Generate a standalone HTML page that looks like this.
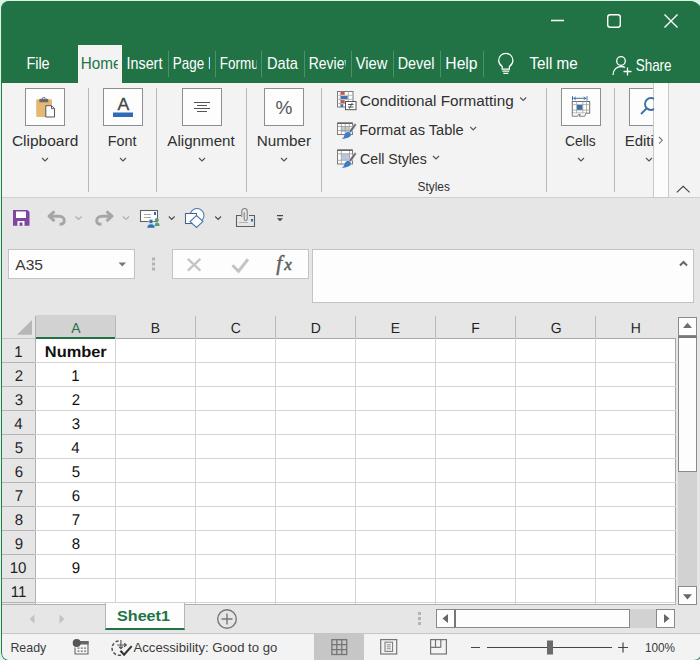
<!DOCTYPE html>
<html><head><meta charset="utf-8">
<style>
*{box-sizing:border-box;margin:0;padding:0}
html,body{width:700px;height:660px;overflow:hidden;background:#d6f5e5;font-family:"Liberation Sans",sans-serif;}
#win{position:absolute;left:1px;top:1px;width:701px;height:660px;background:#e6e6e6;border-radius:8px 12px 8px 8px;overflow:hidden;}
.a{position:absolute}
svg{position:absolute;overflow:visible}
#title{position:absolute;left:0;top:0;width:701px;height:82px;background:#217346}
#lborder{position:absolute;left:0;top:0;width:701px;height:660px;border:1px solid #2a7a50;border-top-color:#217346;border-radius:8px 12px 8px 8px}
.tab{position:absolute;top:52px;font-size:15.5px;color:#fff;white-space:nowrap;overflow:hidden;height:22px;line-height:22px}
.tsep{position:absolute;top:50px;width:1px;height:26px;background:#4d9069}
#home{position:absolute;left:77px;top:44px;width:44px;height:39px;background:#f3f3f3}
#ribbon{position:absolute;left:1px;top:82px;width:700px;height:115px;background:#f3f3f3;border-bottom:1px solid #cfcfcf}
.gsep{position:absolute;top:87px;width:1px;height:104px;background:#b8b8b8}
.ibox{position:absolute;top:87px;width:40px;height:38px;background:#fdfdfd;border:1px solid #8e8e8e}
.gl{position:absolute;top:129px;height:20px;line-height:20px;font-size:15.5px;color:#2b2b2b;text-align:center;white-space:nowrap}
.sl{position:absolute;height:20px;line-height:20px;font-size:15.5px;color:#2b2b2b;white-space:nowrap}
#grid{position:absolute;left:35px;top:337px;width:640px;height:266px;background:#fff}
.vl{position:absolute;top:315px;width:1px;height:288px;background:#d4d4d4}
.hl{position:absolute;left:1px;width:674px;height:1px;background:#d4d4d4}
.ch{position:absolute;top:318px;width:80px;height:18px;line-height:18px;text-align:center;font-size:14.5px;color:#262626}
.rh{position:absolute;left:1px;width:34px;height:22px;line-height:22px;text-align:center;font-size:14.5px;color:#262626}
.cv{position:absolute;left:35px;width:80px;height:22px;line-height:22px;text-align:center;font-size:14.5px;color:#111}
.st{position:absolute;font-size:13px;color:#3b3b3b;white-space:nowrap;height:18px;line-height:18px}
</style></head><body>
<div id="win">
<div id="title"></div>
<div id="home"></div>
<div class="tsep" style="left:167px"></div>
<div class="tsep" style="left:214px"></div>
<div class="tsep" style="left:260px"></div>
<div class="tsep" style="left:303px"></div>
<div class="tsep" style="left:350px"></div>
<div class="tsep" style="left:392px"></div>
<div class="tsep" style="left:439px"></div>
<div class="tsep" style="left:482px"></div>
<!-- window controls -->
<svg style="left:0;top:0" width="699" height="82" viewBox="0 0 699 82" fill="none" stroke="#fff" stroke-width="1.4">
<path d="M550 19.5h13"/>
<rect x="606.7" y="13.7" width="12.6" height="12.6" rx="2.5"/>
<path d="M663.5 13.5l13 13M676.5 13.5l-13 13"/>
<!-- lightbulb -->
<path d="M501.200 65.600c-2.500-2-3.500-4-3.500-6.200a7.100 7.100 0 0 1 14.200 0c0 2.200-1 4.200-3.500 6.200v2.400h-7.200zM501.300 70.200h7M502.300 72.300h5" stroke-width="1.250"/>
<!-- share person -->
<circle cx="620" cy="60" r="4.300" stroke-width="1.3"/>
<path d="M612 74c0-5 3.500-8.500 8-8.500 1.500 0 2.800 .3 4 1M626.500 66.500v8M622.500 70.500h8" stroke-width="1.300"/>
</svg>

<div id="ribbon"></div>
<div class="gsep" style="left:87px"></div>
<div class="gsep" style="left:155px"></div>
<div class="gsep" style="left:245px"></div>
<div class="gsep" style="left:320px"></div>
<div class="gsep" style="left:545px"></div>
<div class="gsep" style="left:613px"></div>
<div class="ibox" style="left:24px"></div>
<div class="ibox" style="left:102px"></div>
<div class="ibox" style="left:181px"></div>
<div class="ibox" style="left:263px"></div>
<div class="ibox" style="left:560px"></div>
<div class="ibox" style="left:628px"></div>
<!-- ribbon scroll button -->
<div class="a" style="left:652px;top:82px;width:16px;height:115px;background:#fcfcfc;border:1px solid #c8c8c8;border-top:none"></div>

<svg style="left:0;top:0" width="699" height="200" viewBox="0 0 699 200" fill="none">
<!-- chevrons -->
<g stroke="#555" stroke-width="1.200">
<path d="M41 157l3 3 3-3M119 157l3 3 3-3M198 157l3 3 3-3M280 157l3 3 3-3M577 157l3 3 3-3M645 157l3 3 3-3"/>
<path d="M519.200 96.500l3 3 3-3M469.200 125.800l3 3 3-3M432 155l3 3 3-3"/>

<path d="M675.800 191.400l6.400-6 6.400 6" stroke="#444" stroke-width="1.150"/>
</g>
<!-- clipboard icon -->
<rect x="35.200" y="98.200" width="15.800" height="17.800" rx="1.200" fill="#e5b873"/>
<path d="M38.300 101.200v-2.200q0-1.300 1.300-1.300h1.500a1.700 1.700 0 0 1 3.400 0h1.500q1.300 0 1.300 1.300v2.200z" fill="#6a6a6a"/>
<circle cx="42.800" cy="97.500" r=".7" fill="#f3f3f3"/>
<path d="M44.800 104.700h5.700l3 3v8.300h-8.700z" fill="#fff" stroke="#555" stroke-width="1"/>
<path d="M50.500 104.700v3h3" fill="none" stroke="#555" stroke-width=".9"/>
<!-- font icon -->
<text transform="translate(122.300 109.400) scale(1.05 1)" font-family="Liberation Sans" font-size="16.800" fill="#454545" stroke="#454545" stroke-width=".3" text-anchor="middle">A</text>
<rect x="112" y="111.500" width="20" height="4.500" fill="#2e6db4"/>
<!-- alignment icon -->
<path d="M193 101.500h16M196 104.500h10M193 107.500h16M196 110.500h10" stroke="#555" stroke-width="1"/>
<!-- number icon -->
<text x="283" y="113" font-family="Liberation Sans" font-size="19" fill="#555" text-anchor="middle">%</text>
<!-- cond format icon -->
<g transform="translate(-1 -1)">
<rect x="337.500" y="91.500" width="15.500" height="15.500" fill="#fff" stroke="#7a7a7a"/>
<path d="M337.500 95.300h15.500M337.500 99.400h15.500M337.500 103.500h10M340.300 91.500v15.500M348.300 91.500v10" stroke="#a9a9a9" stroke-width=".8"/>
<rect x="340.700" y="92" width="4" height="2.800" fill="#c9553f"/>
<rect x="340.700" y="96" width="7" height="3" fill="#3d75b8"/>
<rect x="340.700" y="100.100" width="4" height="3" fill="#c9553f"/>
<rect x="340.700" y="104.200" width="2.600" height="2.800" fill="#3d75b8"/>
<rect x="345.500" y="101.500" width="10.500" height="8.200" fill="#fff" stroke="#555"/>
<path d="M348 104.500h5.500M348 107h5.500M352.300 102.800l-3 5.800" stroke="#444" stroke-width=".9"/>
</g>
<!-- format as table icon -->
<g transform="translate(-1 -1)">
<rect x="337.500" y="123" width="15" height="11.500" fill="#fff" stroke="#7a7a7a"/>
<rect x="341" y="126.500" width="8" height="5.500" fill="#c5cbd4"/>
<path d="M337.500 126.500h15M337.500 130.500h15M341.300 123v11.500M345.300 123v11.500M349.300 123v11.500" stroke="#9a9a9a" stroke-width=".8"/>
<path d="M337.500 123.300h15" stroke="#666" stroke-width="1.400"/>
<path d="M356.300 125.300l-5.300 7.700-2.300-1.700 5.600-7.500c1.200-.6 2.300 .2 2 1.500z" fill="#6b6b6b" stroke="#f3f3f3" stroke-width=".6"/>
<path d="M348.600 131.800l2.200 1.700c.8 1.600-.4 3.200-2.300 4-2 .9-4.500 1.200-6.900 1.600 2.300-1.400 2.300-3 3.100-4.700 .7-1.500 2.100-2.600 3.900-2.600z" fill="#3d7cc9"/>
</g>
<!-- cell styles icon -->
<g transform="translate(-1 -1)">
<rect x="337.500" y="150" width="15" height="14" fill="#fff" stroke="#7a7a7a"/>
<rect x="341.500" y="154" width="8" height="6" fill="#b9c8dc"/>
<path d="M337.500 153.800h15M337.500 160.300h15M341.300 150v14M349.500 150v14" stroke="#9a9a9a" stroke-width=".8"/>
<path d="M337.500 150.300h15" stroke="#666" stroke-width="1.400"/>
<path d="M356.300 154.300l-5.300 7.700-2.300-1.700 5.600-7.500c1.200-.6 2.300 .2 2 1.500z" fill="#6b6b6b" stroke="#f3f3f3" stroke-width=".6"/>
<path d="M348.600 160.800l2.200 1.700c.8 1.600-.4 3.200-2.300 4-2 .9-4.500 1.200-6.900 1.600 2.300-1.400 2.300-3 3.100-4.700 .7-1.500 2.100-2.600 3.900-2.600z" fill="#3d7cc9"/>
</g>
<!-- cells icon -->
<g transform="translate(-1 -1)">
<path d="M573.500 98.300h12.500M572.500 96.200v4.300M587 96.200v4.300" stroke="#3a6ea5" stroke-width="1"/>
<path d="M575.800 96.800l-2 1.500 2 1.500M583.700 96.800l2 1.500-2 1.500" stroke="#3a6ea5" stroke-width=".9" fill="none"/>
<rect x="572.300" y="101.500" width="17.400" height="11.700" fill="#fff" stroke="#6e6e6e"/>
<path d="M572.300 104.600h17.400M572.300 110.100h17.400M576.600 101.500v11.700M582.800 101.500v11.700M586.500 101.500v11.700" stroke="#a0a0a0" stroke-width=".8"/>
<rect x="577" y="105" width="5.400" height="4.800" fill="#3a6ea5"/>
<path d="M572.300 113.200v3h5.200l1.200-1.800h1.600l-1.200 1.800h5.700l1.300-3" fill="#fff" stroke="#6e6e6e" stroke-width=".9"/>
</g>
<!-- editing icon -->
<g stroke="#3a6ea5" stroke-width="1.800" fill="none">
<circle cx="650" cy="103" r="6"/>
<path d="M645.500 107.500l-5.500 5.500"/>
</g>
</svg>
<!-- re-cover editing icon by scroll button -->
<div class="a" style="left:653px;top:82px;width:14px;height:114px;background:#fcfcfc"></div>
<svg style="left:0;top:0" width="699" height="200" viewBox="0 0 699 200" fill="none"><path d="M658 136l3.300 3.300-3.300 3.300" stroke="#777" stroke-width="1.100"/></svg>

<!-- QAT -->
<svg style="left:0;top:197px" width="699" height="42" viewBox="0 197 699 42" fill="none">
<!-- save -->
<path d="M12 209h14.500l2 2v13.800h-16.500z" fill="#7f469f"/>
<rect x="15" y="210.500" width="10" height="6.500" fill="#fff"/>
<rect x="16.500" y="220" width="7" height="4.800" fill="#fff"/>
<rect x="18.500" y="221.500" width="3" height="3.300" fill="#7f469f"/>
<!-- undo -->
<path d="M53.500 210.300l-5.500 4.900 5.500 4.900M48.500 215.200h9.500c3.400 0 5.300 2 5.300 4.300s-1.900 3.800-4.800 3.800" stroke="#a6a6a6" stroke-width="2.900" stroke-linejoin="round"/>
<path d="M74.500 215.500l3 3 3-3" stroke="#b0b0b0" stroke-width="1.200"/>
<!-- redo -->
<path d="M105.500 210.300l5.500 4.900-5.500 4.900M110.500 215.200h-9.500c-3.400 0-5.300 2-5.300 4.300s1.900 3.800 4.800 3.800" stroke="#a6a6a6" stroke-width="2.900" stroke-linejoin="round"/>
<path d="M122 215.500l3 3 3-3" stroke="#b0b0b0" stroke-width="1.200"/>
<!-- mail people -->
<rect x="139.500" y="209.500" width="17" height="11" fill="#fff" stroke="#606060" stroke-width="1.050"/>
<path d="M143 213.500h7M143 216.500h7" stroke="#a8a8a8" stroke-width="1"/>
<rect x="153" y="211" width="2" height="3" fill="#2e6db4"/>
<circle cx="150" cy="220.500" r="2.300" fill="#2e6db4" stroke="#e6e6e6" stroke-width=".8"/>
<path d="M146 227c0-2.800 1.800-4 4-4s4 1.200 4 4z" fill="#2e6db4" stroke="#e6e6e6" stroke-width=".5"/>
<circle cx="155.800" cy="219" r="2" fill="#5a9a78"/>
<path d="M153.600 225c.2-2.300 1-3.400 2.400-3.400s2.600 1.100 2.600 3.400z" fill="#5a9a78"/>
<path d="M167.800 215.500l2.900 2.900 2.900-2.900M214.200 215.500l2.900 2.900 2.900-2.900" stroke="#505050" stroke-width="1.200"/>
<!-- shapes -->
<circle cx="196" cy="214.500" r="7" fill="#fff" stroke="#4a78ae" stroke-width="1.050"/>
<rect x="184.500" y="212.500" width="11" height="10" fill="#fff" stroke="#4a6488" stroke-width="1.050"/>
<path d="M195.500 214.500l6.500 6-6.500 6-6.500-6z" fill="#fff" stroke="#4a78ae" stroke-width="1.050"/>
<!-- attach -->
<path d="M240 214.500h-4.500v11h18v-11h-5.500" stroke="#5e5e5e" stroke-width="1.100"/>
<path d="M238 221.500h9" stroke="#aaa" stroke-width=".9"/>
<path d="M240.800 216v-5.800a2.700 2.700 0 0 1 5.400 0v7.800a1.500 1.500 0 0 1-3 0v-6.800" stroke="#7d7d7d" stroke-width="1.050"/>
<rect x="250" y="218" width="2" height="2.500" fill="#2e6db4"/>
<!-- customize -->
<path d="M276 214.600h6" stroke="#444" stroke-width="1.300"/>
<path d="M276 217.200h6l-3 3z" fill="#444"/>
</svg>

<!-- formula bar -->
<div class="a" style="left:7px;top:248px;width:127px;height:30px;background:#fdfdfd;border:1px solid #c3c3c3"></div>
<div class="a" style="left:171px;top:248px;width:137px;height:30px;background:#fdfdfd;border:1px solid #c3c3c3"></div>
<div class="a" style="left:311px;top:248px;width:382px;height:54px;background:#fdfdfd;border:1px solid #c3c3c3"></div>
<svg style="left:0;top:240px" width="699" height="70" viewBox="0 240 699 70" fill="none">
<path d="M117.500 261.500h7.500l-3.750 4z" fill="#777"/>
<rect x="151" y="256.500" width="3" height="3" fill="#b3b3b3"/><rect x="151" y="261.500" width="3" height="3" fill="#b3b3b3"/><rect x="151" y="266.500" width="3" height="3" fill="#b3b3b3"/>
<path d="M186.800 257.800l12.600 11.800M199.400 257.800l-12.600 11.800" stroke="#c4c4c4" stroke-width="2.300"/>
<path d="M231.500 264.200l6 6 9.500-12" stroke="#c4c4c4" stroke-width="3" stroke-linejoin="miter"/>
<text x="275.200" y="268.600" font-family="Liberation Serif" font-style="italic" font-size="21" fill="#606060" stroke="#606060" stroke-width=".45">f</text><text x="283.200" y="269" font-family="Liberation Serif" font-style="italic" font-size="17" fill="#606060" stroke="#606060" stroke-width=".55">x</text>
<path d="M679 264.500l3.500-3.500 3.500 3.500" stroke="#666" stroke-width="2"/>
</svg>

<!-- grid -->
<svg style="left:0;top:0" width="40" height="340" viewBox="0 0 40 340"><path d="M31 319v14.700h-15z" fill="#b7b7b7"/></svg>
<div class="a" style="left:35px;top:314px;width:80px;height:24px;background:#d2d2d2"></div>
<div id="grid"></div>
<div class="a" style="left:35px;top:336px;width:80px;height:2px;background:#217346"></div>
<div class="a" style="left:115px;top:337px;width:560px;height:1px;background:#a8a8a8"></div>
<div class="a" style="left:1px;top:337px;width:34px;height:1px;background:#c6c6c6"></div>
<div class="vl" style="left:34px;background:#b0b0b0"></div>
<div class="vl" style="left:114px;background:#d4d4d4"></div>
<div class="vl" style="left:194px;background:#d4d4d4"></div>
<div class="vl" style="left:274px;background:#d4d4d4"></div>
<div class="vl" style="left:354px;background:#d4d4d4"></div>
<div class="vl" style="left:434px;background:#d4d4d4"></div>
<div class="vl" style="left:514px;background:#d4d4d4"></div>
<div class="vl" style="left:594px;background:#d4d4d4"></div>
<div class="vl" style="left:674px;top:337px;height:266px;background:#a6a6a6"></div>
<div class="a" style="left:114px;top:315px;height:22px;width:1px;background:#b9b9b9"></div>
<div class="a" style="left:194px;top:315px;height:22px;width:1px;background:#b9b9b9"></div>
<div class="a" style="left:274px;top:315px;height:22px;width:1px;background:#b9b9b9"></div>
<div class="a" style="left:354px;top:315px;height:22px;width:1px;background:#b9b9b9"></div>
<div class="a" style="left:434px;top:315px;height:22px;width:1px;background:#b9b9b9"></div>
<div class="a" style="left:514px;top:315px;height:22px;width:1px;background:#b9b9b9"></div>
<div class="a" style="left:594px;top:315px;height:22px;width:1px;background:#b9b9b9"></div>

<div class="hl" style="top:361px"></div>
<div class="a" style="left:1px;top:361px;width:33px;height:1px;background:#b4b4b4"></div>
<div class="hl" style="top:385px"></div>
<div class="a" style="left:1px;top:385px;width:33px;height:1px;background:#b4b4b4"></div>
<div class="hl" style="top:409px"></div>
<div class="a" style="left:1px;top:409px;width:33px;height:1px;background:#b4b4b4"></div>
<div class="hl" style="top:433px"></div>
<div class="a" style="left:1px;top:433px;width:33px;height:1px;background:#b4b4b4"></div>
<div class="hl" style="top:457px"></div>
<div class="a" style="left:1px;top:457px;width:33px;height:1px;background:#b4b4b4"></div>
<div class="hl" style="top:481px"></div>
<div class="a" style="left:1px;top:481px;width:33px;height:1px;background:#b4b4b4"></div>
<div class="hl" style="top:505px"></div>
<div class="a" style="left:1px;top:505px;width:33px;height:1px;background:#b4b4b4"></div>
<div class="hl" style="top:529px"></div>
<div class="a" style="left:1px;top:529px;width:33px;height:1px;background:#b4b4b4"></div>
<div class="hl" style="top:553px"></div>
<div class="a" style="left:1px;top:553px;width:33px;height:1px;background:#b4b4b4"></div>
<div class="hl" style="top:577px"></div>
<div class="a" style="left:1px;top:577px;width:33px;height:1px;background:#b4b4b4"></div>
<div class="hl" style="top:601px"></div>
<div class="a" style="left:1px;top:601px;width:33px;height:1px;background:#b4b4b4"></div>

<!-- vertical scrollbar -->
<div class="a" style="left:677px;top:316px;width:19px;height:288px;background:#d2d2d2"></div>
<div class="a" style="left:677px;top:316px;width:19px;height:19px;background:#fdfdfd;border:1px solid #8a8a8a"></div>
<div class="a" style="left:677px;top:335px;width:19px;height:136px;background:#fdfdfd;border:1px solid #8a8a8a;border-top:2px solid #777"></div>
<div class="a" style="left:677px;top:585px;width:19px;height:19px;background:#fdfdfd;border:1px solid #8a8a8a"></div>
<!-- sheet tab bar -->
<div class="a" style="left:1px;top:603px;width:674px;height:1px;background:#b0b0b0"></div>
<div class="a" style="left:104px;top:602px;width:80px;height:27px;background:#fdfdfd;border-left:1px solid #b5b5b5;border-right:1px solid #b5b5b5;border-bottom:2px solid #217346"></div>
<!-- h scrollbar -->
<div class="a" style="left:435px;top:608px;width:239px;height:19px;background:#d2d2d2"></div>
<div class="a" style="left:435px;top:608px;width:19px;height:19px;background:#fdfdfd;border:1px solid #8a8a8a"></div>
<div class="a" style="left:453px;top:608px;width:176px;height:19px;background:#fdfdfd;border:1px solid #8a8a8a;border-left:2px solid #777"></div>
<div class="a" style="left:655px;top:608px;width:19px;height:19px;background:#fdfdfd;border:1px solid #8a8a8a"></div>
<!-- status bar -->
<div class="a" style="left:1px;top:632px;width:700px;height:28px;background:#f3f3f3;border-top:1px solid #c6c6c6"></div>
<div class="a" style="left:313px;top:633px;width:50px;height:27px;background:#c6c6c6"></div>
<svg style="left:0;top:600px" width="699" height="59" viewBox="0 600 699 59" fill="none">
<!-- scroll arrows -->
<path d="M682 594" />
<path d="M28.500 618l5-4.500v9zM63.500 618l-5-4.500v9z" fill="#c3c3c3"/>
<circle cx="226" cy="618" r="9.300" stroke="#777" stroke-width="1.400"/>
<path d="M220.500 618h11M226 612.500v11" stroke="#777" stroke-width="1.400"/>
<rect x="417" y="611" width="3" height="3" fill="#b3b3b3"/><rect x="417" y="616" width="3" height="3" fill="#b3b3b3"/><rect x="417" y="621" width="3" height="3" fill="#b3b3b3"/>
<path d="M441.500 617.500l5.500-4.500v9z" fill="#666"/>
<path d="M668.500 617.500l-5.500-4.500v9z" fill="#666"/>
<!-- macro icon -->
<path d="M79 640.500h8v12.500h-13v-6.500" stroke="#666" stroke-width="1.100"/>
<rect x="79" y="640" width="8.500" height="3.500" fill="#666"/>
<circle cx="75.700" cy="642" r="4" fill="#555"/>
<path d="M76.500 647.200h9M76.500 650.200h9" stroke="#777" stroke-width="1.300" stroke-dasharray="2 1.300"/>
<!-- accessibility icon -->
<g transform="translate(1.300 .4)">
<path d="M116.300 639.600A7.200 7.200 0 1 0 119.500 653.500" stroke="#555" stroke-width="1.500" stroke-dasharray="3.200 1.900"/>
<path d="M118.600 638.600v8.500M114.800 643.600h3.800M118.600 643.600h5.500M121.800 641.800l2.300 1.800-2.300 1.800M116.600 645.300l2 2 2-2" stroke="#555" stroke-width="1.100"/>
<path d="M118.200 649.300l3.600 4 7.600-8.600" stroke="#333" stroke-width="2.100"/>
</g>
<!-- view icons -->
<g stroke="#757575" stroke-width="1.300">
<rect x="330.900" y="638.700" width="14.800" height="14.800"/>
<path d="M335.800 638.700v14.800M340.800 638.700v14.800M330.900 643.600h14.800M330.900 648.600h14.800"/>
<rect x="379.700" y="638.600" width="16" height="14.400" stroke-width="1.200"/>
<rect x="384" y="641.200" width="7.600" height="9.200" stroke-width="1"/>
<path d="M385.800 643.800h4M385.800 645.800h4M385.800 647.800h4" stroke-width=".8"/>
<rect x="429.600" y="638.600" width="15.800" height="14.400" stroke-width="1.200"/>
<path d="M429.600 646.400h10.200M434.500 638.600v7.800M439.800 638.600v7.800" stroke-width="1.200"/>
</g>
<!-- zoom -->
<path d="M470 646.500h9M486 646.500h125" stroke="#444" stroke-width="1.200"/>
<path d="M617 646.500h10M622 641.500v10" stroke="#444" stroke-width="1.200"/>
<rect x="546" y="639.500" width="6" height="14" fill="#6a6a6a"/>
</svg>
<svg style="left:670px;top:310px" width="29" height="300" viewBox="670 310 29 300" fill="none">
<path d="M682 327l4.500-5.200 4.500 5.200z" fill="#6e6e6e"/>
<path d="M682 593.200l4.500 5.200 4.500-5.200z" fill="#666"/>
</svg>

<div id="lborder"></div>
</div>
<svg style="left:0;top:0" width="700" height="660" viewBox="0 0 700 660" font-family="Liberation Sans, sans-serif"><defs><clipPath id="c1"><rect x="78" y="0" width="39.80" height="660"/></clipPath><clipPath id="c3"><rect x="170" y="0" width="40.00" height="660"/></clipPath><clipPath id="c4"><rect x="217" y="0" width="39.60" height="660"/></clipPath><clipPath id="c6"><rect x="306" y="0" width="39.70" height="660"/></clipPath><clipPath id="c8"><rect x="395" y="0" width="39.90" height="660"/></clipPath><clipPath id="c17"><rect x="620" y="0" width="33.50" height="660"/></clipPath></defs>
<text transform="translate(26.40 69.00) scale(0.9002 1)" font-size="16" fill="#fff">File</text>
<g clip-path="url(#c1)"><text transform="translate(80.75 69.00) scale(0.9521 1)" font-size="16" fill="#217346">Home</text></g>
<text transform="translate(126.50 69.00) scale(0.8971 1)" font-size="16" fill="#fff">Insert</text>
<g clip-path="url(#c3)"><text transform="translate(172.86 69.00) scale(0.8391 1)" font-size="16" fill="#fff">Page Layout</text></g>
<g clip-path="url(#c4)"><text transform="translate(219.76 69.00) scale(0.8417 1)" font-size="16" fill="#fff">Formulas</text></g>
<text transform="translate(267.09 69.00) scale(0.9119 1)" font-size="16" fill="#fff">Data</text>
<g clip-path="url(#c6)"><text transform="translate(308.83 69.00) scale(0.8700 1)" font-size="16" fill="#fff">Review</text></g>
<text transform="translate(355.70 69.00) scale(0.9186 1)" font-size="16" fill="#fff">View</text>
<g clip-path="url(#c8)"><text transform="translate(397.70 69.00) scale(0.9000 1)" font-size="16" fill="#fff">Developer</text></g>
<text transform="translate(445.32 69.00) scale(0.9810 1)" font-size="16" fill="#fff">Help</text>
<text transform="translate(529.50 69.00) scale(0.9531 1)" font-size="16" fill="#fff">Tell me</text>
<text transform="translate(635.70 71.20) scale(0.8412 1)" font-size="16" fill="#fff">Share</text>
<text transform="translate(11.90 146.30) scale(1.0012 1)" font-size="15.5" fill="#303030">Clipboard</text>
<text transform="translate(107.67 146.30) scale(0.9281 1)" font-size="15.5" fill="#303030">Font</text>
<text transform="translate(167.30 146.30) scale(0.9782 1)" font-size="15.5" fill="#303030">Alignment</text>
<text transform="translate(256.82 146.30) scale(0.9839 1)" font-size="15.5" fill="#303030">Number</text>
<text transform="translate(565.00 146.30) scale(0.8933 1)" font-size="15.5" fill="#303030">Cells</text>
<g clip-path="url(#c17)"><text transform="translate(624.63 146.30) scale(0.9700 1)" font-size="15.5" fill="#303030">Editing</text></g>
<text transform="translate(360.10 105.60) scale(0.9851 1)" font-size="15.5" fill="#303030">Conditional Formatting</text>
<text transform="translate(359.16 134.60) scale(0.9442 1)" font-size="15.5" fill="#303030">Format as Table</text>
<text transform="translate(360.10 163.70) scale(0.9106 1)" font-size="15.5" fill="#303030">Cell Styles</text>
<text transform="translate(417.50 191.40) scale(0.9500 1)" font-size="12.5" fill="#303030">Styles</text>
<text transform="translate(15.30 269.85) scale(1.0052 1)" font-size="15.5" fill="#3a3a3a">A35</text>
<text transform="translate(71.25 332.90) rotate(0.03) scale(0.9500 1)" font-size="14.7" fill="#217346">A</text>
<text transform="translate(150.78 332.90) rotate(0.03) scale(0.9500 1)" font-size="14.7" fill="#1f1f1f">B</text>
<text transform="translate(230.78 332.90) rotate(0.03) scale(0.9500 1)" font-size="14.7" fill="#1f1f1f">C</text>
<text transform="translate(310.78 332.90) rotate(0.03) scale(0.9500 1)" font-size="14.7" fill="#1f1f1f">D</text>
<text transform="translate(390.78 332.90) rotate(0.03) scale(0.9500 1)" font-size="14.7" fill="#1f1f1f">E</text>
<text transform="translate(471.25 332.90) rotate(0.03) scale(0.9500 1)" font-size="14.7" fill="#1f1f1f">F</text>
<text transform="translate(550.77 332.90) rotate(0.03) scale(0.9500 1)" font-size="14.7" fill="#1f1f1f">G</text>
<text transform="translate(630.77 332.90) rotate(0.03) scale(0.9500 1)" font-size="14.7" fill="#1f1f1f">H</text>
<text transform="translate(14.33 357.00) rotate(0.03) scale(0.9700 1)" font-size="15.5" fill="#1f1f1f">1</text>
<text transform="translate(14.82 381.00) rotate(0.03) scale(0.9700 1)" font-size="15.5" fill="#1f1f1f">2</text>
<text transform="translate(14.82 405.00) rotate(0.03) scale(0.9700 1)" font-size="15.5" fill="#1f1f1f">3</text>
<text transform="translate(14.33 429.00) rotate(0.03) scale(0.9700 1)" font-size="15.5" fill="#1f1f1f">4</text>
<text transform="translate(14.82 453.00) rotate(0.03) scale(0.9700 1)" font-size="15.5" fill="#1f1f1f">5</text>
<text transform="translate(14.82 477.00) rotate(0.03) scale(0.9700 1)" font-size="15.5" fill="#1f1f1f">6</text>
<text transform="translate(14.82 501.00) rotate(0.03) scale(0.9700 1)" font-size="15.5" fill="#1f1f1f">7</text>
<text transform="translate(14.82 525.00) rotate(0.03) scale(0.9700 1)" font-size="15.5" fill="#1f1f1f">8</text>
<text transform="translate(14.82 549.00) rotate(0.03) scale(0.9700 1)" font-size="15.5" fill="#1f1f1f">9</text>
<text transform="translate(9.67 573.00) rotate(0.03) scale(0.9700 1)" font-size="15.5" fill="#1f1f1f">10</text>
<text transform="translate(10.71 597.00) rotate(0.03) scale(0.9700 1)" font-size="15.5" fill="#1f1f1f">11</text>
<text transform="translate(44.84 357.00) rotate(0.03) scale(1.0585 1)" font-size="15.5" fill="#111" font-weight="bold">Number</text>
<text transform="translate(71.34 381.00) rotate(0.03) scale(0.9700 1)" font-size="15.5" fill="#111">1</text>
<text transform="translate(71.82 405.00) rotate(0.03) scale(0.9700 1)" font-size="15.5" fill="#111">2</text>
<text transform="translate(71.82 429.00) rotate(0.03) scale(0.9700 1)" font-size="15.5" fill="#111">3</text>
<text transform="translate(71.34 453.00) rotate(0.03) scale(0.9700 1)" font-size="15.5" fill="#111">4</text>
<text transform="translate(71.82 477.00) rotate(0.03) scale(0.9700 1)" font-size="15.5" fill="#111">5</text>
<text transform="translate(71.82 501.00) rotate(0.03) scale(0.9700 1)" font-size="15.5" fill="#111">6</text>
<text transform="translate(71.82 525.00) rotate(0.03) scale(0.9700 1)" font-size="15.5" fill="#111">7</text>
<text transform="translate(71.82 549.00) rotate(0.03) scale(0.9700 1)" font-size="15.5" fill="#111">8</text>
<text transform="translate(71.82 573.00) rotate(0.03) scale(0.9700 1)" font-size="15.5" fill="#111">9</text>
<text transform="translate(117.00 620.75) scale(1.0562 1)" font-size="15.3" fill="#217346" font-weight="bold">Sheet1</text>
<text transform="translate(10.41 651.80) scale(0.9921 1)" font-size="12.5" fill="#3b3b3b">Ready</text>
<text transform="translate(133.50 652.10) scale(1.0517 1)" font-size="12.5" fill="#3b3b3b">Accessibility: Good to go</text>
<text transform="translate(645.00 652.00) scale(0.9417 1)" font-size="12.5" fill="#3b3b3b">100%</text>
</svg>
</body></html>
